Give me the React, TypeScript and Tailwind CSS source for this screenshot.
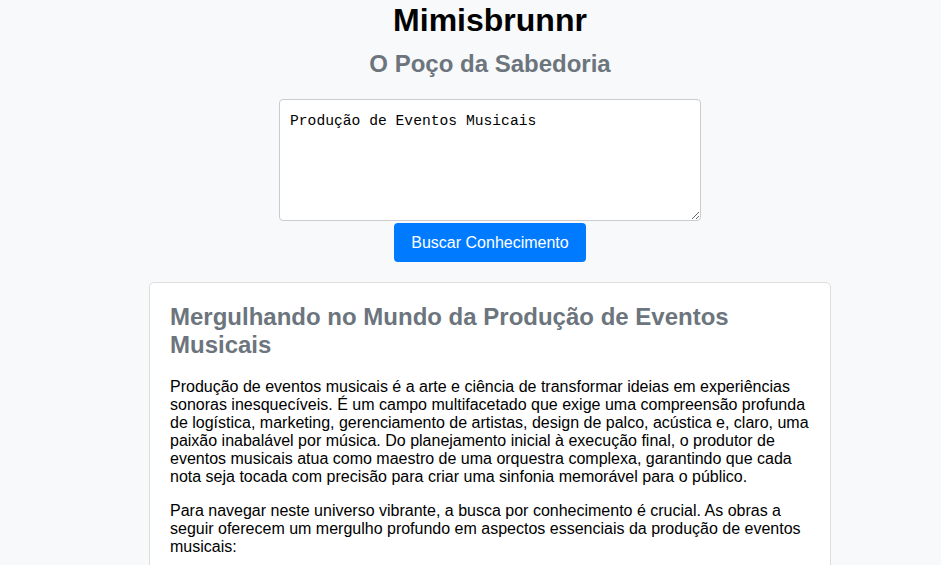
import React from "react";

export default function App() {
  return (
    <div className="min-h-[565px] w-full bg-[#f8f9fa] font-['Liberation_Sans',Arial,sans-serif] text-black">
      <div className="flex flex-col items-center pl-[39px]">
        <h1 className="mt-[2px] text-[32px] font-bold leading-[37px]">Mimisbrunnr</h1>
        <h2 className="mt-[11px] text-[24px] font-bold leading-[28px] text-[#6c757d]">O Poço da Sabedoria</h2>
        <textarea
          defaultValue="Produção de Eventos Musicais"
          className="mt-[21px] block h-[122px] w-[422px] resize-y rounded-[4px] border border-[#ccc] bg-white pl-[10px] pr-[10px] pt-[12px] pb-[10px] font-['Liberation_Mono',monospace] text-[14.67px] leading-[18px] text-black outline-none"
        />
        <button className="mt-[2px] h-[39px] w-[192px] rounded-[4px] bg-[#007bff] text-[16px] text-white">
          Buscar Conhecimento
        </button>
        <div className="mt-[20px] w-[682px] rounded-[5px] border border-[#ddd] bg-white px-[20px] pt-[20px] pb-[20px]">
          <h2 className="text-[24px] font-bold leading-[28px] text-[#6c757d]">
            Mergulhando no Mundo da Produção de Eventos Musicais
          </h2>
          <p className="mt-[19px] text-[16px] leading-[18px]">
            Produção de eventos musicais é a arte e ciência de transformar ideias em experiências sonoras inesquecíveis. É um campo multifacetado que exige uma compreensão profunda de logística, marketing, gerenciamento de artistas, design de palco, acústica e, claro, uma paixão inabalável por música. Do planejamento inicial à execução final, o produtor de eventos musicais atua como maestro de uma orquestra complexa, garantindo que cada nota seja tocada com precisão para criar uma sinfonia memorável para o público.
          </p>
          <p className="mt-[16px] text-[16px] leading-[18px]">
            Para navegar neste universo vibrante, a busca por conhecimento é crucial. As obras a seguir oferecem um mergulho profundo em aspectos essenciais da produção de eventos musicais:
          </p>
        </div>
      </div>
    </div>
  );
}
